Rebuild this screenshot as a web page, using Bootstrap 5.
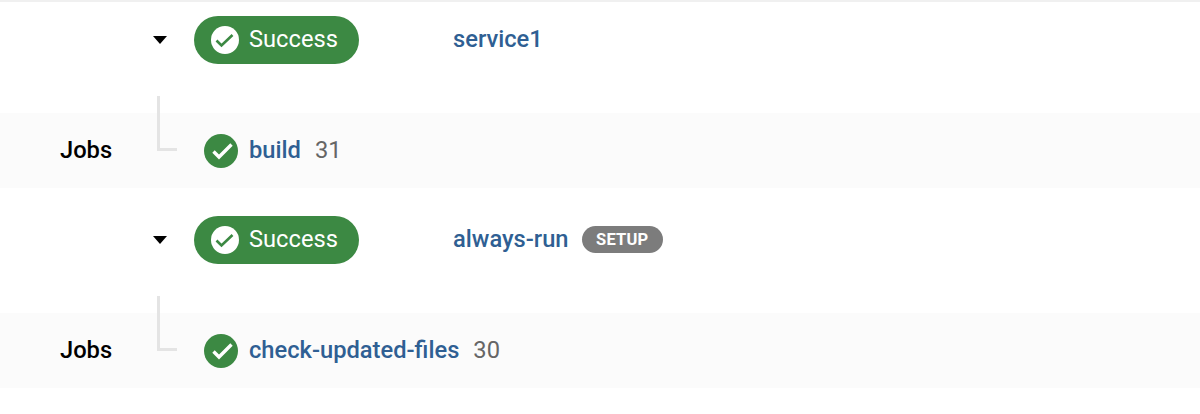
<!DOCTYPE html>
<html lang="en">

<head>
    <meta charset="UTF-8">
    <title>Pipeline</title>
    <link rel="stylesheet" href="https://cdn.jsdelivr.net/npm/bootstrap@5.3.3/dist/css/bootstrap.min.css">
    <style>
        body { font-family: Roboto, "Liberation Sans", sans-serif; font-size: 23.7px; background: #fff; overflow: hidden; }
        .top-rule { height: 2px; background: #f0f0f0; }
        .stage-block { height: 200px; }
        .stage-block.first { height: 198px; }
        .stage-row { height: 113px; padding-top: 16px; }
        .first .stage-row { height: 111px; padding-top: 14px; }
        .stage-line { height: 48px; }
        .caret-down { width: 0; height: 0; margin-left: 153px; margin-right: 26px; border-left: 7.5px solid transparent; border-right: 7.5px solid transparent; border-top: 8px solid #000; }
        .status-pill { width: 165px; height: 48px; margin-left: 1px; border-radius: 24px; background: #3c8943; color: #fff; padding-left: 17px; gap: 10px; }
        .stage-name { margin-left: 94px; gap: 13px; }
        .job-link { color: #2f5f93; font-weight: 500; text-decoration: none; }
        .setup-tag { background: #7c7c7c; color: #fff; font-size: 16.5px; font-weight: 700; height: 27px; padding: 0 14.5px; border-radius: 14px; letter-spacing: .2px; }
        .jobs-band { height: 75px; padding-top: 1px; background: #fbfbfb; position: relative; }
        .jobs-label { width: 204px; padding-left: 60px; color: #000; font-weight: 500; }
        .tree-line { position: absolute; left: 157px; top: -17px; width: 20px; height: 55px; border-left: 3px solid #e4e4e4; border-bottom: 3px solid #e4e4e4; }
        .job-row { gap: 11px; }
        .job-num { color: #666; margin-left: 3px; }
    </style>
</head>

<body>
    <div class="top-rule"></div>

    <div class="stage-block first">
        <div class="stage-row">
            <div class="stage-line d-flex align-items-center">
                <div class="caret-down"></div>
                <div class="status-pill d-flex align-items-center">
                    <svg width="28" height="28" viewBox="0 0 28 28"><circle cx="14" cy="14" r="14" fill="#fff"/><path d="M5.5 14.5L10.5 19.5L21.5 9" fill="none" stroke="#3c8943" stroke-width="2.6"/></svg>
                    <span>Success</span>
                </div>
                <div class="stage-name d-flex align-items-center"><a class="job-link" href="#">service1</a></div>
            </div>
        </div>
        <div class="jobs-band d-flex align-items-center">
            <div class="tree-line"></div>
            <div class="jobs-label">Jobs</div>
            <div class="job-row d-flex align-items-center">
                <svg width="34" height="34" viewBox="0 0 34 34"><circle cx="17" cy="17" r="17" fill="#3c8943"/><path d="M9.5 17.5L15 23L27.5 10.5" fill="none" stroke="#fff" stroke-width="3.4"/></svg>
                <a class="job-link" href="#">build</a>
                <span class="job-num">31</span>
            </div>
        </div>
    </div>

    <div class="stage-block">
        <div class="stage-row">
            <div class="stage-line d-flex align-items-center">
                <div class="caret-down"></div>
                <div class="status-pill d-flex align-items-center">
                    <svg width="28" height="28" viewBox="0 0 28 28"><circle cx="14" cy="14" r="14" fill="#fff"/><path d="M5.5 14.5L10.5 19.5L21.5 9" fill="none" stroke="#3c8943" stroke-width="2.6"/></svg>
                    <span>Success</span>
                </div>
                <div class="stage-name d-flex align-items-center">
                    <a class="job-link" href="#">always-run</a>
                    <span class="setup-tag d-flex align-items-center">SETUP</span>
                </div>
            </div>
        </div>
        <div class="jobs-band d-flex align-items-center">
            <div class="tree-line"></div>
            <div class="jobs-label">Jobs</div>
            <div class="job-row d-flex align-items-center">
                <svg width="34" height="34" viewBox="0 0 34 34"><circle cx="17" cy="17" r="17" fill="#3c8943"/><path d="M9.5 17.5L15 23L27.5 10.5" fill="none" stroke="#fff" stroke-width="3.4"/></svg>
                <a class="job-link" href="#">check-updated-files</a>
                <span class="job-num">30</span>
            </div>
        </div>
    </div>

    <script src="https://cdn.jsdelivr.net/npm/bootstrap@5.3.3/dist/js/bootstrap.bundle.min.js"></script>
</body>

</html>
